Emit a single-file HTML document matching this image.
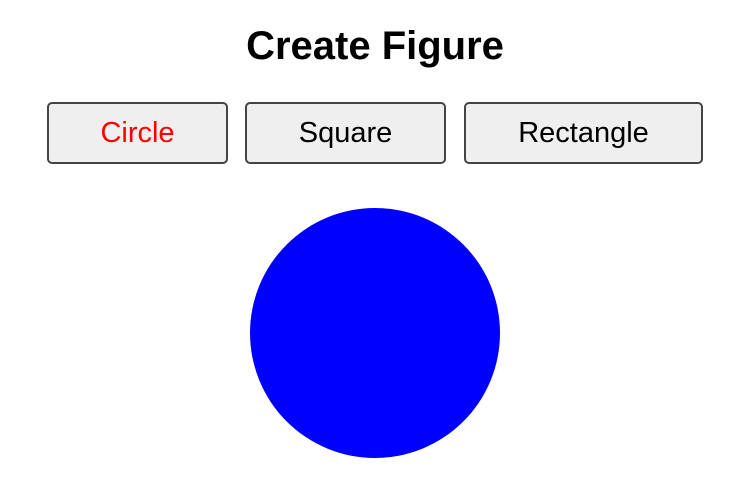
<!DOCTYPE html>
<html><head><style>
body{margin:0;width:736px;height:483px;background:#fff;font-family:"Liberation Sans",Arial,sans-serif;position:relative;overflow:hidden}
h1{position:absolute;left:0;width:750px;top:23px;margin:0;text-align:center;font-size:40px;font-weight:bold;line-height:46px}
.b{position:absolute;top:102px;height:62px;box-sizing:border-box;border:2px solid #444;border-radius:5px;background:#efefef;font-size:29px;text-align:center;line-height:58px;color:#000}
.c{position:absolute;left:250px;top:208px;width:250px;height:250px;border-radius:50%;background:#00f}
</style></head><body>
<h1>Create Figure</h1>
<div class="b" style="left:47px;width:181px;color:#f00">Circle</div>
<div class="b" style="left:245px;width:201px">Square</div>
<div class="b" style="left:464px;width:239px">Rectangle</div>
<div class="c"></div>
</body></html>
